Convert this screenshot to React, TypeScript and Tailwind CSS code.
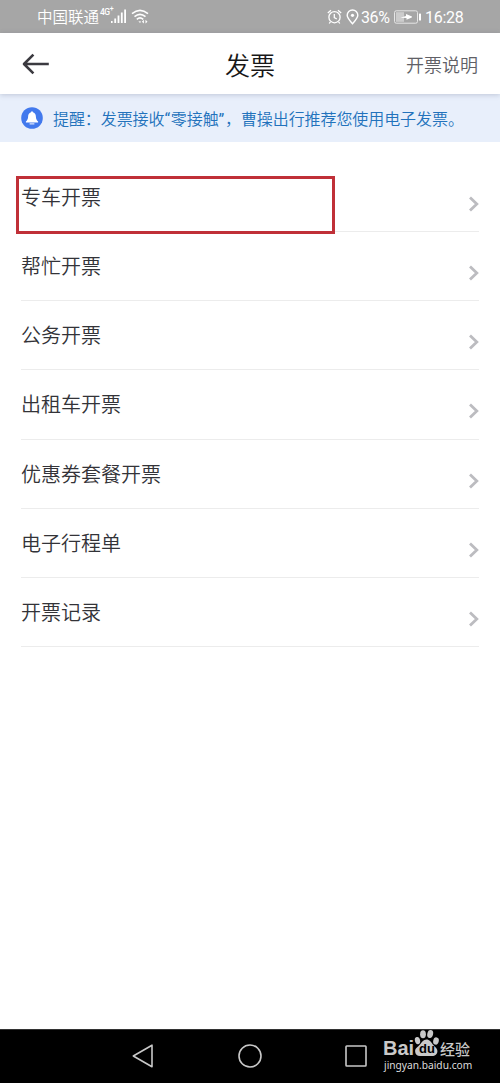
import React from "react";

const items: string[] = [
  "专车开票",
  "帮忙开票",
  "公务开票",
  "出租车开票",
  "优惠券套餐开票",
  "电子行程单",
  "开票记录",
];

function StatusBar() {
  return (
    <div className="flex h-[33px] shrink-0 items-center bg-[#a6a6a6] pl-[37px] pr-[36px] text-white">
      <span className="w-[63px] whitespace-nowrap pt-[4px] text-[15.5px] font-[350] leading-none">中国联通</span>
      <span className="mb-[9px] flex w-[12px] text-[8.5px] font-medium leading-none tracking-[-0.5px]">
        4G<span className="-mt-[2px] text-[7px]">+</span>
      </span>
      <svg className="-ml-[1px]" width="16" height="15" viewBox="0 0 16 15" fill="white">
        <rect x="0" y="12" width="1.6" height="2" />
        <rect x="3.3" y="9.5" width="1.8" height="4.5" />
        <rect x="6.6" y="6.5" width="1.8" height="7.5" />
        <rect x="9.9" y="3.5" width="1.8" height="10.5" />
        <rect x="13.2" y="0.5" width="1.8" height="13.5" />
      </svg>
      <svg className="ml-[4px]" width="18" height="15" viewBox="0 0 18 15" fill="none" stroke="white" strokeWidth="1.6">
        <path d="M1 4.6Q9-2 17 4.6M3.5 7.6Q9 3 14.5 7.6M5.8 10.3Q9 7.6 12.2 10.3" />
        <path d="M7.4 12.2L9 14L10.2 12.6Z" fill="white" stroke="none" />
        <path d="M12.9 10.8L10.9 12.7L12.9 14.6ZM14.5 10.8L16.5 12.7L14.5 14.6Z" fill="white" stroke="none" />
      </svg>
      <div className="ml-auto flex items-center pt-px">
        <svg width="15" height="16" viewBox="0 0 15 16" fill="none" stroke="white" strokeWidth="1.3">
          <circle cx="7.5" cy="8.2" r="5.6" />
          <path d="M7.3 5V8.7L9.8 10M0.8 4L4 1.2M14.2 4L11 1.2M3.4 12.8L2.2 14.5M11.6 12.8L12.8 14.5" />
        </svg>
        <svg className="ml-[4px]" width="13" height="16" viewBox="0 0 13 16" fill="none" stroke="white" strokeWidth="1.4">
          <path d="M6.5 14.7C4.3 12.2 1.2 9.2 1.2 6.3A5.3 5.3 0 0 1 11.8 6.3C11.8 9.2 8.7 12.2 6.5 14.7Z" />
          <circle cx="6.5" cy="6.3" r="1.6" fill="white" stroke="none" />
        </svg>
        <span className="ml-[2px] w-[30px] pt-px text-[16px] leading-none tracking-[-0.4px]">36%</span>
        <svg className="ml-[3px]" width="28" height="14" viewBox="0 0 28 14">
          <rect x="0.5" y="0.8" width="23" height="12.4" rx="1.8" fill="none" stroke="#e6e6e6" />
          <rect x="2" y="2.2" width="8" height="9.6" fill="#cccccc" />
          <path d="M6.3 7.7L12 5.9V4L18 6.4L17.8 7.6L12.5 9.7V7.9Z" fill="white" />
          <rect x="25" y="3.5" width="2" height="7" rx="0.6" fill="white" />
        </svg>
        <span className="ml-[3px] w-[39px] whitespace-nowrap pt-px text-[16px] leading-none tracking-[-0.25px]">16:28</span>
      </div>
    </div>
  );
}

function Header() {
  return (
    <header className="relative z-10 grid h-[61px] shrink-0 grid-cols-3 items-center bg-white px-[22px] shadow-[0_1px_5px_rgba(70,80,110,0.25)]">
      <svg width="28" height="22" viewBox="0 0 28 22" fill="none" stroke="#3b3a40" strokeWidth="2.6" strokeLinejoin="round">
        <path d="M11.4 1.7L2 11L11.4 20.3M2.3 11H26.8" />
      </svg>
      <h1 className="pt-[5px] text-center text-[25px] font-[350] leading-none text-[#181818]">发票</h1>
      <span className="pt-[4px] text-right text-[18px] font-[350] leading-none text-[#606066]">开票说明</span>
    </header>
  );
}

function Notice() {
  return (
    <div className="flex h-[48px] shrink-0 items-center bg-[#e8effb] pl-[21px]">
      <svg width="22" height="22" viewBox="0 0 22 22">
        <circle cx="11" cy="11" r="10.8" fill="#4279ed" />
        <path d="M11 4.2Q11.8 4.2 12 5.2C14.1 5.9 14.9 7.6 14.9 9.7C14.9 12 15.9 13.3 17.1 14.6V15.4H4.9V14.6C6.1 13.3 7.1 12 7.1 9.7C7.1 7.6 7.9 5.9 10 5.2Q10.2 4.2 11 4.2Z" fill="white" />
        <path d="M8.6 16.9H13.4" stroke="white" strokeWidth="1" />
      </svg>
      <p className="ml-[10px] whitespace-nowrap pt-[4px] text-[16px] font-[350] leading-none tracking-[-0.08px] text-[#2272bc]">
        提醒：发票接收<span className="font-normal tracking-[0.7px]">“</span>零接触<span className="font-normal tracking-[0.7px]">”</span>，曹操出行推荐您使用电子发票。
      </p>
    </div>
  );
}

function Watermark() {
  return (
    <div className="absolute left-[383px] top-[-1px] text-[#c9c9c9]">
      <div className="flex h-[28px] items-end">
        <span className="w-[31px] font-['Liberation_Sans'] text-[20px] font-bold leading-[18px]">Bai</span>
        <div className="relative h-[28px] w-[26px]">
          <svg width="26" height="28" viewBox="0 0 26 29" preserveAspectRatio="none" fill="#c9c9c9">
            <ellipse cx="3.5" cy="12" rx="2.6" ry="3.8" transform="rotate(-12 3.5 12)" />
            <ellipse cx="9" cy="5.5" rx="2.9" ry="4.2" />
            <ellipse cx="16.2" cy="5.2" rx="2.9" ry="4.2" transform="rotate(12 16.2 5.2)" />
            <ellipse cx="22" cy="12.4" rx="2.8" ry="3.8" transform="rotate(12 22 12.4)" />
            <path d="M12.4 11C15.6 11 17 13.5 18.6 15.8C20.5 18.3 23.4 19.8 23.4 23C23.4 26 21 28 18.2 28H6C3.1 28 1.1 26.2 1.1 23C1.1 19.6 4.3 18.3 6.2 15.8C8 13.5 9.5 11 12.4 11Z" />
          </svg>
          <span className="absolute left-[5px] top-[13px] font-['Liberation_Sans'] text-[13px] font-bold leading-none text-black">du</span>
        </div>
        <span className="whitespace-nowrap text-[15px] font-medium leading-[14px]">经验</span>
      </div>
      <div className="ml-px mt-[2px] whitespace-nowrap font-['Noto_Sans'] text-[10.2px] leading-[12px] text-[#dddddd]">jingyan.baidu.com</div>
    </div>
  );
}

function NavBar() {
  return (
    <nav className="relative flex h-[54px] shrink-0 items-center justify-between border-t border-[#333333] bg-black pb-[2px] pl-[132px] pr-[132px]">
      <svg width="22" height="26" viewBox="0 0 22 26" fill="none" stroke="#c8c8c8" strokeWidth="1.6" strokeLinejoin="round">
        <path d="M20 2.2V23.8L1.3 13Z" />
      </svg>
      <svg className="overflow-visible" width="24" height="26" viewBox="0 0 24 26" fill="none" stroke="#c8c8c8" strokeWidth="1.6">
        <circle cx="13" cy="13" r="11" />
      </svg>
      <svg width="24" height="26" viewBox="0 0 24 26" fill="none" stroke="#c8c8c8" strokeWidth="1.6">
        <rect x="2" y="3" width="20" height="20" rx="0.7" />
      </svg>
      <Watermark />
    </nav>
  );
}

export default function App() {
  return (
    <div className="flex h-[1083px] w-[500px] flex-col overflow-hidden bg-white font-['Roboto','Noto_Sans_CJK_SC',sans-serif]">
      <StatusBar />
      <Header />
      <Notice />
      <main className="relative flex-1 px-[21px] pt-[20.5px]">
        <ul>
          {items.map((label) => (
            <li key={label} className="flex h-[69.25px] items-start justify-between border-b border-[#ececec]">
              <span className="pt-[21px] text-[20px] font-[350] leading-[28px] text-[#333338]">{label}</span>
              <svg className="mt-[33px]" width="10" height="16" viewBox="0 0 10 16" fill="none" stroke="#bcbcc0" strokeWidth="2.8">
                <path d="M1 1.5L7.8 8L1 14.5" />
              </svg>
            </li>
          ))}
        </ul>
        <div className="absolute left-[16px] top-[34px] h-[58px] w-[319px] border-[3px] border-[#c03038]" />
      </main>
      <NavBar />
    </div>
  );
}
